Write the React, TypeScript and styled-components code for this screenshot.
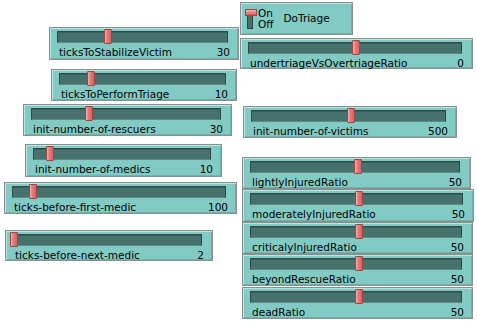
import React from "react";
import styled, { createGlobalStyle } from "styled-components";

const GlobalStyle = createGlobalStyle`
  html, body {
    margin: 0;
    padding: 0;
    background: #ffffff;
  }
  body {
    font-family: "DejaVu Sans", "Liberation Sans", sans-serif;
  }
`;

// NetLogo interface: widgets sit on a free canvas at their own coordinates
const Canvas = styled.div`
  position: relative;
  width: 477px;
  height: 331px;
  overflow: hidden;
  background: #ffffff;
`;

const Widget = styled.div<{ $x: number; $y: number; $w: number; $h: number }>`
  position: absolute;
  left: ${(p) => p.$x}px;
  top: ${(p) => p.$y}px;
  width: ${(p) => p.$w}px;
  height: ${(p) => p.$h}px;
  box-sizing: border-box;
  background: #82cbc4;
  border: 1px solid #8a8f8e;
  box-shadow: inset 1px 1px 0 #b9e6e1, inset -1px -1px 0 #6eb3ab;
`;

const SliderBody = styled.div`
  display: flex;
  flex-direction: column;
  padding: 3px 8px 0 7px;
`;

const Track = styled.div`
  position: relative;
  height: 12px;
  margin-right: 2px;
  box-sizing: border-box;
  background: #47716c;
  border: 1px solid #2d4a47;
  border-bottom-color: #5d8c86;
  box-shadow: inset 0 1px 0 #3a605b;
`;

const Thumb = styled.div`
  position: absolute;
  top: -3px;
  width: 8px;
  height: 15px;
  box-sizing: border-box;
  border: 1px solid #9c4646;
  border-radius: 1px;
  background: linear-gradient(to right, #f6b2b0 0%, #e77d7e 35%, #d9605f 100%);
`;

const LabelRow = styled.div`
  display: flex;
  justify-content: space-between;
  align-items: center;
  height: 13px;
  margin-top: 3px;
  padding-left: 2px;
  font-size: 10.5px;
  line-height: 13px;
  color: #000000;
  white-space: nowrap;
`;

const SwitchBody = styled.div`
  display: flex;
  align-items: center;
  height: 100%;
  padding-left: 4px;
  box-sizing: border-box;
`;

const Toggle = styled.div`
  position: relative;
  width: 12px;
  height: 20px;
  margin-top: 1px;
`;

const ToggleSlot = styled.div`
  position: absolute;
  left: 2px;
  top: 6px;
  width: 6px;
  height: 14px;
  box-sizing: border-box;
  background: #46706b;
  border: 1px solid #2b4643;
`;

const ToggleCap = styled.div`
  position: absolute;
  left: 0;
  top: 0;
  width: 12px;
  height: 7px;
  box-sizing: border-box;
  border: 1px solid #9c4646;
  background: linear-gradient(to bottom, #f6b2b0 0%, #e77d7e 50%, #d9605f 100%);
`;

const OnOff = styled.div`
  display: flex;
  flex-direction: column;
  margin-left: 1px;
  font-size: 10.5px;
  line-height: 11px;
  color: #000000;
`;

const SwitchLabel = styled.span`
  margin-left: 10px;
  margin-bottom: 1px;
  font-size: 10.5px;
  color: #000000;
`;

type SliderData = {
  label: string;
  value: number;
  x: number;
  y: number;
  w: number;
  h: number;
  thumb: number;
};

const sliders: SliderData[] = [
  { label: "ticksToStabilizeVictim", value: 30, x: 49, y: 27, w: 190, h: 33, thumb: 104 },
  { label: "ticksToPerformTriage", value: 10, x: 51, y: 69, w: 186, h: 32, thumb: 87 },
  { label: "init-number-of-rescuers", value: 30, x: 23, y: 104, w: 209, h: 32, thumb: 85 },
  { label: "init-number-of-medics", value: 10, x: 25, y: 144, w: 197, h: 33, thumb: 46 },
  { label: "ticks-before-first-medic", value: 100, x: 4, y: 182, w: 233, h: 32, thumb: 29 },
  { label: "ticks-before-next-medic", value: 2, x: 5, y: 230, w: 208, h: 31, thumb: 10 },
  { label: "undertriageVsOvertriageRatio", value: 0, x: 240, y: 38, w: 233, h: 31, thumb: 352 },
  { label: "init-number-of-victims", value: 500, x: 243, y: 106, w: 214, h: 32, thumb: 347 },
  { label: "lightlyInjuredRatio", value: 50, x: 242, y: 157, w: 229, h: 32, thumb: 354 },
  { label: "moderatelyInjuredRatio", value: 50, x: 242, y: 189, w: 232, h: 33, thumb: 355 },
  { label: "criticalyInjuredRatio", value: 50, x: 242, y: 222, w: 231, h: 32, thumb: 355 },
  { label: "beyondRescueRatio", value: 50, x: 242, y: 254, w: 231, h: 32, thumb: 355 },
  { label: "deadRatio", value: 50, x: 242, y: 287, w: 231, h: 32, thumb: 355 },
];

const Slider: React.FC<{ s: SliderData }> = ({ s }) => (
  <Widget $x={s.x} $y={s.y} $w={s.w} $h={s.h}>
    <SliderBody>
      <Track>
        <Thumb style={{ left: s.thumb - s.x - 9 }} />
      </Track>
      <LabelRow>
        <span>{s.label}</span>
        <span>{s.value}</span>
      </LabelRow>
    </SliderBody>
  </Widget>
);

const App: React.FC = () => {
  return (
    <>
      <GlobalStyle />
      <Canvas>
        <Widget $x={240} $y={2} $w={113} $h={33}>
          <SwitchBody>
            <Toggle>
              <ToggleSlot />
              <ToggleCap />
            </Toggle>
            <OnOff>
              <span>On</span>
              <span>Off</span>
            </OnOff>
            <SwitchLabel>DoTriage</SwitchLabel>
          </SwitchBody>
        </Widget>
        {sliders.map((s) => (
          <Slider key={s.label} s={s} />
        ))}
      </Canvas>
    </>
  );
};

export default App;
